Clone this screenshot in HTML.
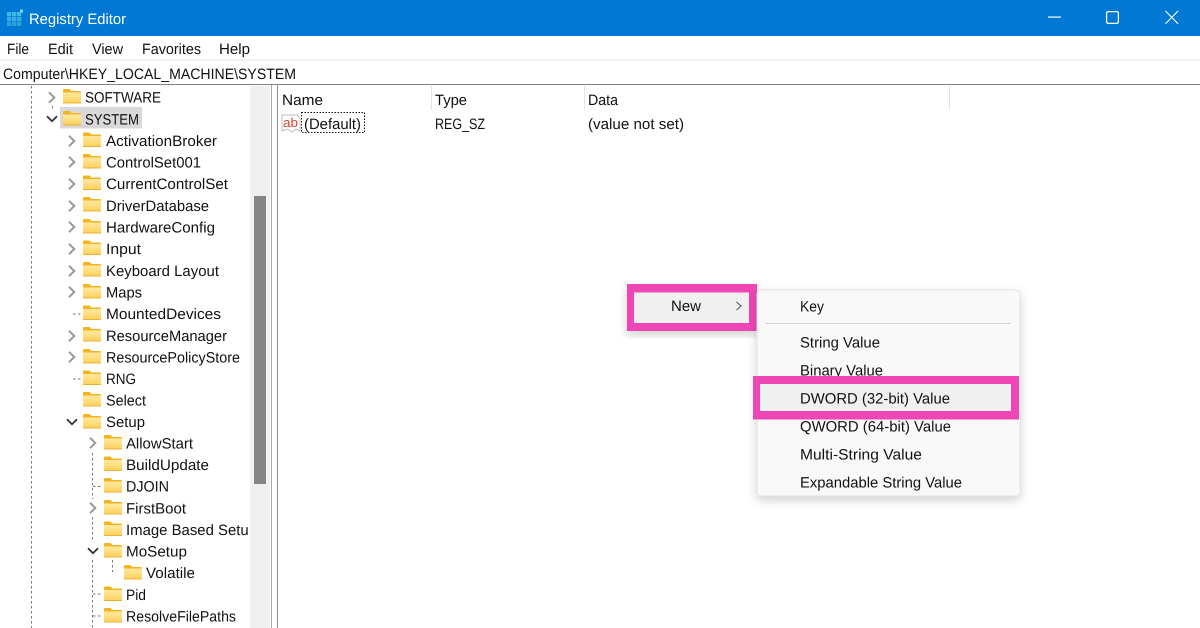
<!DOCTYPE html>
<html><head><meta charset="utf-8"><title>Registry Editor</title>
<style>
html,body{margin:0;padding:0;background:#fff;width:1200px;height:628px;overflow:hidden}
svg{display:block}
text{font-family:"Liberation Sans",sans-serif;font-size:15px;fill:#111;text-rendering:geometricPrecision}
</style></head><body>
<svg width="1200" height="628" viewBox="0 0 1200 628" xmlns="http://www.w3.org/2000/svg">
<defs>
<linearGradient id="fg" x1="0" y1="0" x2="0" y2="1"><stop offset="0" stop-color="#ffe9a0"/><stop offset="1" stop-color="#fdd15c"/></linearGradient>
<clipPath id="tc"><rect x="0" y="85" width="248" height="543"/></clipPath>
<symbol id="f" width="18" height="15" viewBox="0 0 18 15" overflow="visible">
<path d="M0 1Q0 0 1 0H6.500L8.500 2H17Q18 2 18 3V5H0Z" fill="#f4b41f"/>
<rect x="0" y="3.500" width="18" height="10.500" fill="url(#fg)"/>
<rect x="0" y="13.500" width="18" height="1" fill="#edb02f"/>
</symbol>
<symbol id="r" width="8" height="12" viewBox="0 0 8 12"><path d="M1 .8L6.300 6L1 11.200" fill="none" stroke="#999" stroke-width="2"/></symbol>
<symbol id="d" width="12" height="8" viewBox="0 0 12 8"><path d="M1 1.200L6 6.200L11 1.200" fill="none" stroke="#333" stroke-width="1.800"/></symbol>
<filter id="sh" x="-10%" y="-10%" width="120%" height="125%"><feDropShadow dx="0" dy="4" stdDeviation="5" flood-color="#000" flood-opacity=".18"/></filter>
</defs>

<!-- title bar -->
<rect width="1200" height="36" fill="#0078d4"/>
<g fill="#3fb8e6">
<rect x="7" y="12" width="4.300" height="4.300"/><rect x="12" y="12" width="4.300" height="4.300"/><rect x="17" y="12" width="4.300" height="4.300"/>
<rect x="7" y="17" width="4.300" height="4.300" fill="#35addf"/><rect x="12" y="17" width="4.300" height="4.300" fill="#35addf"/><rect x="17" y="17" width="4.300" height="4.300" fill="#35addf"/>
<rect x="7" y="22" width="4.300" height="4" fill="#2ea2da"/><rect x="12" y="22" width="4.300" height="4" fill="#2ea2da"/><rect x="17" y="22" width="4.300" height="4" fill="#2ea2da"/>
<rect x="20" y="9.500" width="3" height="3" fill="#7fd4ef"/>
</g>
<text x="29" y="24" textLength="97" lengthAdjust="spacingAndGlyphs" style="fill:#fff">Registry Editor</text>
<rect x="1048" y="16.500" width="13" height="1.200" fill="#fff"/>
<rect x="1106.600" y="11.600" width="11.800" height="11.800" rx="1.500" fill="none" stroke="#fff" stroke-width="1.300"/>
<path d="M1165.500 11L1178 23.800M1178 11L1165.500 23.800" stroke="#fff" stroke-width="1.100" fill="none"/>

<!-- menu -->
<rect y="59.500" width="1200" height="1.500" fill="#eeeeee"/>
<rect y="84" width="1200" height="1" fill="#858585"/>
<text x="7" y="54" textLength="22" lengthAdjust="spacingAndGlyphs">File</text>
<text x="48" y="54" textLength="25" lengthAdjust="spacingAndGlyphs">Edit</text>
<text x="92" y="54" textLength="31" lengthAdjust="spacingAndGlyphs">View</text>
<text x="142" y="54" textLength="59" lengthAdjust="spacingAndGlyphs">Favorites</text>
<text x="219" y="54" textLength="31" lengthAdjust="spacingAndGlyphs">Help</text>
<text x="3" y="79" textLength="293" lengthAdjust="spacingAndGlyphs">Computer\HKEY_LOCAL_MACHINE\SYSTEM</text>

<!-- scrollbar & splitter -->
<rect x="250" y="86" width="20" height="542" fill="#f0f0f0"/>
<rect x="254" y="196" width="12" height="288" fill="#858585"/>
<rect x="271" y="85" width="1" height="543" fill="#a8a8a8"/>
<rect x="277" y="85" width="1" height="543" fill="#8c8c8c"/>

<!-- tree lines -->
<g stroke="#777" stroke-width="1" stroke-dasharray="2.500 2.500" fill="none">
<path d="M31.500 86V628"/>
<path d="M52.500 106V109"/>
<path d="M92.500 453V499M92.500 517V541M92.500 560V628"/>
<path d="M112.500 560V572"/>
<path d="M73 314H81M73 379H81M93 486.500H102M93 594H102M93 616H102"/>
</g>

<!-- tree -->
<rect x="60" y="107" width="82" height="21.500" fill="#d9d9d9"/>
<use href="#r" x="48" y="91.500"/><use href="#f" x="63" y="89"/><text x="85" y="102.500" textLength="76" lengthAdjust="spacingAndGlyphs">SOFTWARE</text>
<use href="#d" x="46" y="115"/><use href="#f" x="63" y="111"/><text x="85" y="124.500" textLength="54" lengthAdjust="spacingAndGlyphs">SYSTEM</text>

<use href="#r" x="68" y="135"/><use href="#f" x="83" y="132.500"/><text x="106" y="146" textLength="111" lengthAdjust="spacingAndGlyphs">ActivationBroker</text>
<use href="#r" x="68" y="156"/><use href="#f" x="83" y="154"/><text x="106" y="167.500" textLength="95" lengthAdjust="spacingAndGlyphs">ControlSet001</text>
<use href="#r" x="68" y="178"/><use href="#f" x="83" y="175.500"/><text x="106" y="189" textLength="122" lengthAdjust="spacingAndGlyphs">CurrentControlSet</text>
<use href="#r" x="68" y="200"/><use href="#f" x="83" y="197"/><text x="106" y="211" textLength="103" lengthAdjust="spacingAndGlyphs">DriverDatabase</text>
<use href="#r" x="68" y="221"/><use href="#f" x="83" y="219"/><text x="106" y="232.500" textLength="109" lengthAdjust="spacingAndGlyphs">HardwareConfig</text>
<use href="#r" x="68" y="243"/><use href="#f" x="83" y="240.500"/><text x="106" y="254" textLength="35" lengthAdjust="spacingAndGlyphs">Input</text>
<use href="#r" x="68" y="265"/><use href="#f" x="83" y="262"/><text x="106" y="276" textLength="113" lengthAdjust="spacingAndGlyphs">Keyboard Layout</text>
<use href="#r" x="68" y="286"/><use href="#f" x="83" y="284"/><text x="106" y="297.500" textLength="36" lengthAdjust="spacingAndGlyphs">Maps</text>
<use href="#f" x="83" y="305.500"/><text x="106" y="319" textLength="115" lengthAdjust="spacingAndGlyphs">MountedDevices</text>
<use href="#r" x="68" y="330"/><use href="#f" x="83" y="327"/><text x="106" y="341" textLength="121" lengthAdjust="spacingAndGlyphs">ResourceManager</text>
<use href="#r" x="68" y="351"/><use href="#f" x="83" y="349"/><text x="106" y="362.500" textLength="134" lengthAdjust="spacingAndGlyphs">ResourcePolicyStore</text>
<use href="#f" x="83" y="370.500"/><text x="106" y="384" textLength="30" lengthAdjust="spacingAndGlyphs">RNG</text>
<use href="#f" x="83" y="392"/><text x="106" y="405.500" textLength="40" lengthAdjust="spacingAndGlyphs">Select</text>
<use href="#d" x="66" y="418"/><use href="#f" x="83" y="414"/><text x="106" y="427" textLength="39" lengthAdjust="spacingAndGlyphs">Setup</text>

<use href="#r" x="89" y="437"/><use href="#f" x="104" y="435"/><text x="126" y="448.500" textLength="67" lengthAdjust="spacingAndGlyphs">AllowStart</text>
<use href="#f" x="104" y="456.500"/><text x="126" y="470" textLength="83" lengthAdjust="spacingAndGlyphs">BuildUpdate</text>
<use href="#f" x="104" y="478"/><text x="126" y="491.500" textLength="43" lengthAdjust="spacingAndGlyphs">DJOIN</text>
<use href="#r" x="89" y="502"/><use href="#f" x="104" y="500"/><text x="126" y="513.500" textLength="60" lengthAdjust="spacingAndGlyphs">FirstBoot</text>
<use href="#f" x="104" y="521.500"/><text x="126" y="535" textLength="131" lengthAdjust="spacingAndGlyphs" clip-path="url(#tc)">Image Based Setup</text>
<use href="#d" x="87" y="547"/><use href="#f" x="104" y="543"/><text x="126" y="556.500" textLength="61" lengthAdjust="spacingAndGlyphs">MoSetup</text>
<use href="#f" x="124" y="565"/><text x="146" y="578" textLength="49" lengthAdjust="spacingAndGlyphs">Volatile</text>
<use href="#f" x="104" y="586.500"/><text x="126" y="600" textLength="20" lengthAdjust="spacingAndGlyphs">Pid</text>
<use href="#f" x="104" y="608"/><text x="126" y="621.500" textLength="110" lengthAdjust="spacingAndGlyphs">ResolveFilePaths</text>

<!-- list -->
<rect x="431" y="86" width="1" height="24" fill="#e5e5e5"/>
<rect x="584" y="86" width="1" height="24" fill="#e5e5e5"/>
<rect x="949" y="86" width="1" height="24" fill="#e5e5e5"/>
<text x="282" y="105" textLength="41" lengthAdjust="spacingAndGlyphs">Name</text>
<text x="435" y="105" textLength="32" lengthAdjust="spacingAndGlyphs">Type</text>
<text x="588" y="105" textLength="30" lengthAdjust="spacingAndGlyphs">Data</text>
<path d="M282 115H297L300 118V131L296 129L292 132L287 129L282 131Z" fill="#fff" stroke="#bdbdbd"/>
<text x="283" y="127" textLength="15" lengthAdjust="spacingAndGlyphs" style="fill:#d8452a;font-size:13px">ab</text>
<rect x="301.500" y="112.500" width="63" height="20" fill="none" stroke="#111" stroke-dasharray="1.500 1.500"/>
<text x="304" y="129" textLength="57" lengthAdjust="spacingAndGlyphs">(Default)</text>
<text x="435" y="129" textLength="50" lengthAdjust="spacingAndGlyphs">REG_SZ</text>
<text x="588" y="129" textLength="96" lengthAdjust="spacingAndGlyphs">(value not set)</text>

<!-- menus -->
<rect x="627" y="284" width="130" height="47" fill="#ee46b5" filter="url(#sh)"/>
<rect x="634" y="292.500" width="115" height="30.500" fill="#f0f0f0"/>
<text x="671" y="311" textLength="30" lengthAdjust="spacingAndGlyphs">New</text>
<path d="M736.500 302L741 306L736.500 310" fill="none" stroke="#555" stroke-width="1.100"/>

<rect x="757" y="290" width="263" height="206" rx="4" fill="#f9f9f9" stroke="#e3e3e3" filter="url(#sh)"/>
<rect x="765" y="323" width="246" height="1" fill="#d8d8d8"/>
<text x="800" y="311.500" textLength="24" lengthAdjust="spacingAndGlyphs">Key</text>
<text x="800" y="347.500" textLength="80" lengthAdjust="spacingAndGlyphs">String Value</text>
<text x="800" y="375.500" textLength="83" lengthAdjust="spacingAndGlyphs">Binary Value</text>
<text x="800" y="431.500" textLength="151" lengthAdjust="spacingAndGlyphs">QWORD (64-bit) Value</text>
<text x="800" y="459.500" textLength="122" lengthAdjust="spacingAndGlyphs">Multi-String Value</text>
<text x="800" y="487.500" textLength="162" lengthAdjust="spacingAndGlyphs">Expandable String Value</text>
<rect x="753" y="376" width="266" height="43.500" fill="#ee46b5"/>
<rect x="760" y="384" width="251" height="27" fill="#f0f0f0"/>
<text x="800" y="403.500" textLength="150" lengthAdjust="spacingAndGlyphs">DWORD (32-bit) Value</text>
</svg>
</body></html>
